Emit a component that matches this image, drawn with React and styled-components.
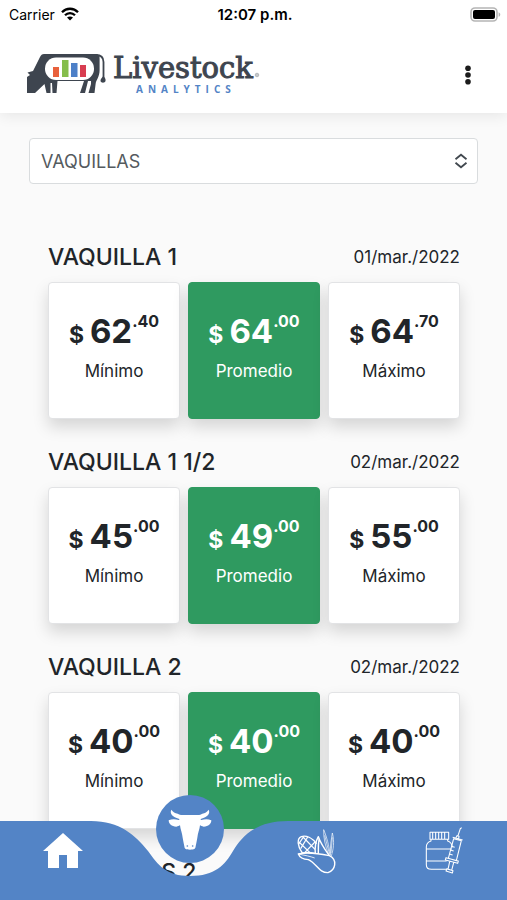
import { useState } from 'react';
import styled, { createGlobalStyle } from 'styled-components';

const GlobalStyle = createGlobalStyle`
  :root {
    --blue: #5384c6;
    --green: #2f9a60;
    --dark: #212529;
    --slate: #3e454f;
    --page: #fafafa;
    --font: Inter, 'Liberation Sans', sans-serif;
  }

  * {
    box-sizing: border-box;
  }

  body {
    margin: 0;
    background-color: var(--page);
    color: var(--dark);
    font-family: var(--font);
  }
`;

const Screen = styled.div`
  display: flex;
  flex-direction: column;
  height: 100vh;
  overflow: hidden;
`;

const TopArea = styled.header`
  position: relative;
  z-index: 1;
  background-color: white;
  box-shadow: 0 2px 14px rgba(0, 0, 0, 0.09);
`;

const StatusBar = styled.div`
  display: grid;
  grid-template-columns: 1fr auto 1fr;
  align-items: center;
  height: 28px;
  padding: 0 6px 0 9px;
  color: black;
  font-size: 14px;
`;

const Carrier = styled.span`
  display: flex;
  align-items: center;
  gap: 6px;
`;

const Clock = styled.time`
  font-size: 15px;
  font-weight: 600;
`;

const BatteryIcon = styled.svg`
  justify-self: end;
`;

const AppBar = styled.div`
  display: flex;
  justify-content: space-between;
  align-items: center;
  height: 85px;
  padding: 8px 24px 0 27px;
`;

const LogoLink = styled.a`
  display: flex;
`;

const MenuButton = styled.button`
  display: flex;
  justify-content: center;
  width: 30px;
  padding: 8px 0;
  border: none;
  background: none;
  cursor: pointer;
`;

const Content = styled.main`
  flex: 1;
  min-height: 0;
  overflow-y: auto;
  scrollbar-width: none;
  padding: 25px 29px 0;
`;

const SelectWrapper = styled.div`
  display: grid;
  align-items: center;
  margin-bottom: 55px;

  select,
  svg {
    grid-area: 1 / 1;
  }

  svg {
    justify-self: end;
    margin-right: 10px;
    pointer-events: none;
  }
`;

const Select = styled.select`
  appearance: none;
  width: 100%;
  height: 46px;
  padding: 0 40px 0 11px;
  border: 1px solid #d9dcde;
  border-radius: 4px;
  background-color: white;
  color: #545a5e;
  font-family: var(--font);
  font-size: 18px;
`;

const PriceSection = styled.section`
  padding: 0 18px 0 19px;
  margin-bottom: 25px;
`;

const SectionHeader = styled.div`
  display: flex;
  justify-content: space-between;
  align-items: center;
  height: 36px;
  margin-bottom: 7px;
`;

const Title = styled.h2`
  margin: 0;
  font-size: 23px;
  font-weight: 500;
`;

const DateText = styled.time`
  font-size: 17px;
  font-weight: 400;
`;

const Cards = styled.div`
  display: grid;
  grid-template-columns: repeat(3, 1fr);
  gap: 8px;
`;

const Card = styled.div`
  display: flex;
  flex-direction: column;
  align-items: center;
  height: 137px;
  padding-top: 28px;
  border: 1px solid ${({ $active }) => ($active ? 'var(--green)' : '#e2e3e5')};
  border-radius: 4px;
  background-color: ${({ $active }) => ($active ? 'var(--green)' : 'white')};
  color: ${({ $active }) => ($active ? 'white' : 'var(--dark)')};
  box-shadow: 0 8px 16px rgba(0, 0, 0, 0.15);
`;

const Price = styled.div`
  display: flex;
  align-items: baseline;
  height: 40px;
  font-size: 33px;
  font-weight: 700;
  line-height: 40px;
`;

const Currency = styled.span`
  margin-right: 6px;
  font-size: 23px;
`;

const Cents = styled.sup`
  align-self: flex-start;
  font-size: 16px;
  line-height: 20px;
`;

const CardLabel = styled.span`
  margin-top: 9px;
  font-size: 17px;
  line-height: 22px;
`;

const BottomNav = styled.nav`
  position: fixed;
  right: 0;
  bottom: 0;
  left: 0;
  z-index: 2;
  display: grid;
  height: 79px;
`;

const NavShape = styled.div`
  grid-area: 1 / 1;
  display: grid;
  grid-template-columns: calc(37.5% - 102px) 204px 1fr;

  svg {
    display: block;
    overflow: visible;
  }
`;

const NavFill = styled.div`
  background-color: var(--blue);
`;

const NavList = styled.ul`
  grid-area: 1 / 1;
  display: grid;
  grid-template-columns: repeat(4, 1fr);
  margin: 0;
  padding: 0;
  list-style: none;
`;

const NavItem = styled.li`
  display: flex;
  justify-content: center;
  align-items: flex-start;
`;

const NavLink = styled.a`
  display: flex;
  justify-content: center;
  align-items: center;
  width: 68px;
  height: ${({ $raised }) => ($raised ? '68px' : '60px')};
  margin-top: ${({ $raised }) => ($raised ? '-26px' : '0')};
  border-radius: ${({ $raised }) => ($raised ? '50%' : '0')};
  background-color: ${({ $raised }) => ($raised ? 'var(--blue)' : 'transparent')};
  color: white;
`;

const prices = [
  { name: 'VAQUILLA 1', date: '01/mar./2022', values: ['62.40', '64.00', '64.70'] },
  { name: 'VAQUILLA 1 1/2', date: '02/mar./2022', values: ['45.00', '49.00', '55.00'] },
  { name: 'VAQUILLA 2', date: '02/mar./2022', values: ['40.00', '40.00', '40.00'] },
  { name: 'VAQUILLAS 2', values: [] },
];

const labels = ['Mínimo', 'Promedio', 'Máximo'];

const Wifi = () => (
  <svg width="18" height="14" viewBox="0 0 18 14" fill="none" stroke="black" strokeWidth="2.3">
    <path d="M1 5.2C5.4 0.6 12.6 0.6 17 5.2" />
    <path d="M4 8.3C6.8 5.4 11.2 5.4 14 8.3" />
    <path d="M9 13.6L6 10.6C7.7 9 10.3 9 12 10.6Z" fill="black" stroke="none" />
  </svg>
);

const Battery = () => (
  <BatteryIcon width="31" height="15" viewBox="0 0 31 15">
    <rect x="1" y="1" width="26" height="13" rx="4" fill="white" stroke="#b5b5b5" strokeWidth="1.6" />
    <rect x="3" y="3" width="22" height="9" rx="2" fill="black" />
    <path d="M28.6 5.2C30.8 6 30.8 9 28.6 9.8Z" fill="#b5b5b5" />
  </BatteryIcon>
);

const Logo = () => (
  <svg width="236" height="46" viewBox="0 0 236 46" role="img" aria-label="Livestock Analytics">
    <g transform="translate(0 1)">
      <path
        d="M17 1H69C71.5 1 73 3 72.600 6V17C72.600 24 69 27 68.600 31L67.500 40H61.500L64 31V28H61L58 40H53L57 28H30.500L29.500 40H25.500L25 30H23.500V40H19.500L17.500 31L8 40H0V24L3 22L0.500 19.500L6 18L13 4C14 2 15 1 17 1Z"
        fill="#3e454f"
      />
      <path d="M69 2C74 2 76.500 4 76.500 9V26" fill="none" stroke="#3e454f" strokeWidth="1.8" />
      <path d="M76.300 23C78 25 79 26 78.500 28C78 30.300 74 30.300 73.500 28C73.200 26 75 25 76.300 23Z" fill="#3e454f" />
      <rect x="18" y="4.500" width="49" height="22.500" rx="11" fill="white" />
      <rect x="26" y="14" width="6" height="10" fill="#e8613c" />
      <rect x="35" y="7" width="6.500" height="17" fill="#85bd4b" />
      <rect x="44" y="10" width="6.500" height="14" fill="#4d80c8" />
      <rect x="53" y="12" width="6" height="12" fill="#d83d51" />
    </g>
    <text x="86" y="26" fontFamily="'DejaVu Serif', serif" fontSize="29" fill="#3e454f" stroke="#3e454f" strokeWidth="1">
      Livestock
    </text>
    <circle cx="230" cy="23" r="1.800" fill="#c4c7ca" stroke="#aaaeb3" strokeWidth="0.8" />
    <text x="109" y="41" fontFamily="'Open Sans', sans-serif" fontSize="10" fontWeight="700" letterSpacing="5" fill="#5384c6">
      ANALYTICS
    </text>
  </svg>
);

const Dots = () => (
  <svg width="8" height="20" viewBox="0 0 8 20" fill="#1c1c1c">
    <circle cx="4" cy="3.2" r="2.800" />
    <circle cx="4" cy="10" r="2.800" />
    <circle cx="4" cy="16.8" r="2.800" />
  </svg>
);

const UpDown = () => (
  <svg width="14" height="16" viewBox="0 0 14 16" fill="none" stroke="#42494f" strokeWidth="1.800">
    <path d="M1.500 6.200L7 1.700L12.500 6.200M1.500 9.800L7 14.300L12.500 9.800" />
  </svg>
);

const Home = () => (
  <svg width="40" height="36" viewBox="0 0 40 36" fill="currentColor">
    <path d="M20 0L40 18H35V35H24V22H16V35H5V18H0Z" />
  </svg>
);

const Cow = () => (
  <svg width="44" height="41" viewBox="505 90 132 123" fill="currentColor">
    <path d="M548 108H594C600 108 604 106 608 104C616 102 622 99 627 92C633 105 622 114 605 119C602 120 602 122 605 123C615 120 625 119 635 124C635 135 626 143 612 143C607 143 603 139 601 139C600 151 594 163 593 176C591 185 590 194 588 202C587 211 584 212 571 212C558 212 555 211 554 202C552 194 551 185 549 176C548 163 542 151 541 139C539 139 535 143 530 143C516 143 507 135 507 124C517 119 527 120 537 123C540 122 540 120 537 119C520 114 509 105 515 92C520 99 526 102 534 104C538 106 543 108 548 108Z" />
    <circle cx="563" cy="201" r="2.500" fill="#5384c6" />
    <circle cx="579" cy="201" r="2.500" fill="#5384c6" />
  </svg>
);

const Corn = () => (
  <svg width="40" height="46" viewBox="54 36 120 138" fill="none" stroke="currentColor" strokeWidth="4.200" strokeLinejoin="round">
    <path d="M70 111C55 91 53 67 67 62C83 57 101 68 113 83M70 111C83 108 94 109 108 112" />
    <path d="M60 78L92 109M72 63L108 100M65 98L86 63M77 110L108 78M59 84L74 62" strokeWidth="3.600" />
    <path d="M109 112C107 92 110 76 118 62C124 80 136 98 151 119M120 70C117 90 118 105 118 113" />
    <path d="M58 114C84 107 122 113 151 119C177 132 169 162 147 170C120 171 113 142 88 131C73 130 62 124 58 114Z" />
    <path d="M58 114C78 118 94 121 107 126" strokeWidth="2.500" />
    <path d="M149 116C139 91 133 65 134 41C142 60 151 89 153 118M154 118C153 91 157 70 160 51C167 77 163 101 157 120M137 58L151 113M160 64L156 111" strokeWidth="2" />
  </svg>
);

const Medicine = () => (
  <svg width="38" height="48" viewBox="44 38 114 144" fill="none" stroke="currentColor" strokeWidth="3.200" strokeLinejoin="round">
    <path d="M59 54H115V75H59ZM67 54V75M76 54V75M85 54V75M94 54V75M103 54V75M62 75V80C52 83 48 88 48 98V151C48 160 54 165 63 165H110M112 75V80C121 83 125 88 126 99M48 104H124M48 140H109" />
    <path d="M130 73L153 79L138 139L114 132ZM127 69L157 77M137 70L140 64L146 66L145 73M143 64L150 43M149 44L154 40M123 96L133 99M120 107L130 110M117 119L127 122M107 130L144 140L142 147L105 137ZM118 142L113 165L124 168L130 145M110 163L128 169L126 176L107 170Z" />
  </svg>
);

const navItems = [
  { name: 'Inicio', icon: <Home /> },
  { name: 'Ganado', icon: <Cow />, raised: true },
  { name: 'Granos', icon: <Corn /> },
  { name: 'Medicamentos', icon: <Medicine /> },
];

const PriceCard = ({ label, value }) => {
  const [whole, cents] = value.split('.');

  return (
    <Card $active={label === 'Promedio'}>
      <Price>
        <Currency>$</Currency>
        {whole}
        <Cents>.{cents}</Cents>
      </Price>
      <CardLabel>{label}</CardLabel>
    </Card>
  );
};

export default function App() {
  const [category, setCategory] = useState('VAQUILLAS');

  return (
    <Screen>
      <GlobalStyle />
      <TopArea>
        <StatusBar>
          <Carrier>
            Carrier <Wifi />
          </Carrier>
          <Clock>12:07 p.m.</Clock>
          <Battery />
        </StatusBar>
        <AppBar>
          <LogoLink href="#inicio">
            <Logo />
          </LogoLink>
          <MenuButton type="button" aria-label="Menú">
            <Dots />
          </MenuButton>
        </AppBar>
      </TopArea>
      <Content>
        <SelectWrapper>
          <Select
            aria-label="Categoría"
            value={category}
            onChange={(ev) => setCategory(ev.target.value)}
          >
            <option value="VAQUILLAS">VAQUILLAS</option>
          </Select>
          <UpDown />
        </SelectWrapper>
        {prices.map(({ name, date, values }) => (
          <PriceSection key={name}>
            <SectionHeader>
              <Title>{name}</Title>
              {date ? <DateText>{date}</DateText> : null}
            </SectionHeader>
            <Cards>
              {values.map((value, i) => (
                <PriceCard key={labels[i]} label={labels[i]} value={value} />
              ))}
            </Cards>
          </PriceSection>
        ))}
      </Content>
      <BottomNav>
        <NavShape>
          <NavFill />
          <svg width="204" height="79" viewBox="0 0 204 79">
            <path
              d="M-1 0H3C32 0 47 14 60 30C70 44 78 55 102 55C127 55 137 44 145 30C156 12 171 0 200 0H205V79H-1Z"
              fill="#5384c6"
            />
          </svg>
          <NavFill />
        </NavShape>
        <NavList>
          {navItems.map(({ name, icon, raised }) => (
            <NavItem key={name}>
              <NavLink href={`#${name.toLowerCase()}`} aria-label={name} $raised={raised}>
                {icon}
              </NavLink>
            </NavItem>
          ))}
        </NavList>
      </BottomNav>
    </Screen>
  );
}
